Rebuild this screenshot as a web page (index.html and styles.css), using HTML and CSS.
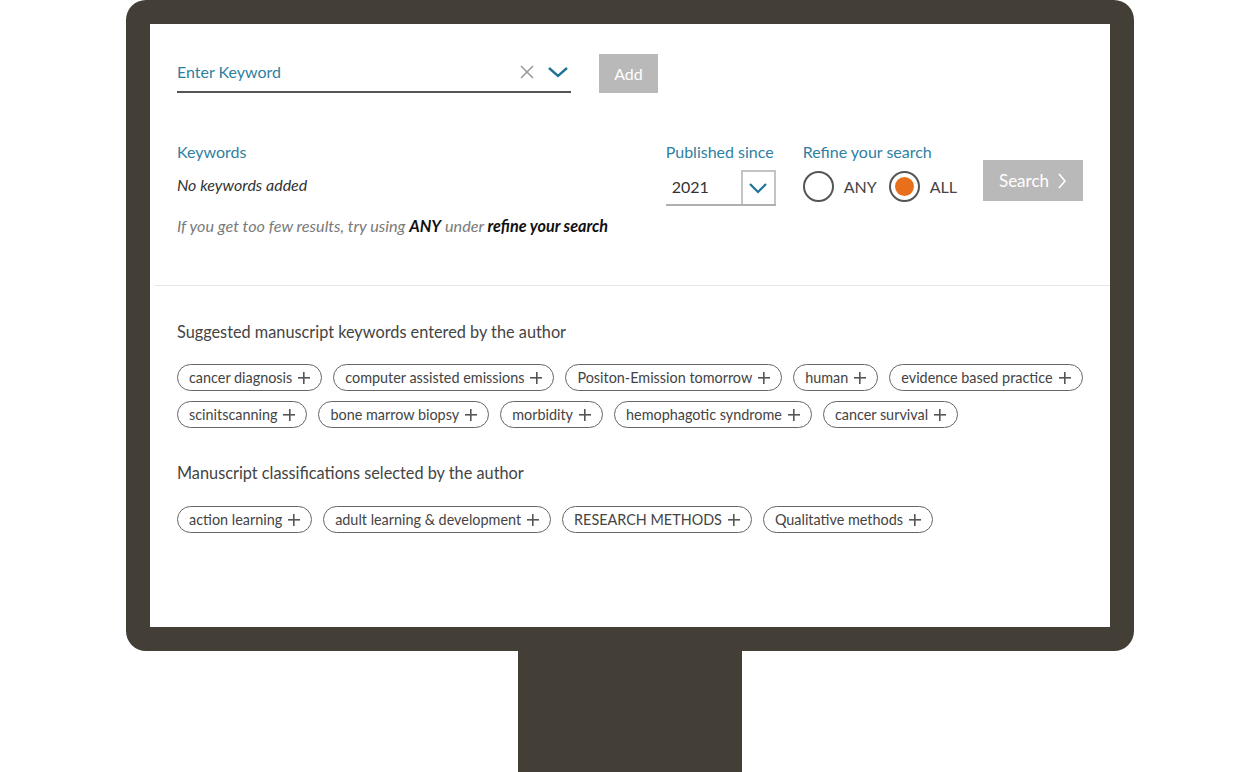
FILE: index.html
```html
<!DOCTYPE html>
<html lang="en">
<head>
  <meta charset="UTF-8">
  <title>Keyword Search</title>
  <link rel="stylesheet" href="styles.css">
</head>
<body>
  <div class="monitor">
    <div class="screen">
      <div class="top">
        <div class="entry">
          <div class="field">
            <span class="placeholder">Enter Keyword</span>
            <svg class="clear" width="16" height="16" viewBox="0 0 16 16"><path d="M2 2 L14 14 M14 2 L2 14" stroke="#9a9a9a" stroke-width="1.6" fill="none"/></svg>
            <svg class="caret" width="22" height="14" viewBox="0 0 22 14"><path d="M2 3 L11 11 L20 3" stroke="#1f7396" stroke-width="2.4" fill="none"/></svg>
          </div>
          <div class="btn add">Add</div>
        </div>

        <div class="filters">
          <div class="keywords">
            <div class="label">Keywords</div>
            <div class="empty">No keywords added</div>
            <div class="hint">If you get too few results, try using <b>ANY</b> under <b>refine your search</b></div>
          </div>

          <div class="since">
            <div class="label">Published since</div>
            <div class="select">
              <span>2021</span>
              <div class="select-btn">
                <svg width="20" height="12" viewBox="0 0 20 12"><path d="M2 2 L10 10 L18 2" stroke="#1f7396" stroke-width="2.2" fill="none"/></svg>
              </div>
            </div>
          </div>

          <div class="refine">
            <div class="label">Refine your search</div>
            <div class="radios">
              <div class="radio"></div>
              <span>ANY</span>
              <div class="radio on"></div>
              <span>ALL</span>
            </div>
          </div>

          <div class="btn search">Search
            <svg width="10" height="18" viewBox="0 0 10 18"><path d="M2 2 L8 9 L2 16" stroke="#fff" stroke-width="1.6" fill="none"/></svg>
          </div>
        </div>
      </div>

      <div class="bottom">
        <h2>Suggested manuscript keywords entered by the author</h2>
        <div class="chips">
          <span class="chip">cancer diagnosis</span>
          <span class="chip">computer assisted emissions</span>
          <span class="chip">Positon-Emission tomorrow</span>
          <span class="chip">human</span>
          <span class="chip">evidence based practice</span>
        </div>
        <div class="chips">
          <span class="chip">scinitscanning</span>
          <span class="chip">bone marrow biopsy</span>
          <span class="chip">morbidity</span>
          <span class="chip">hemophagotic syndrome</span>
          <span class="chip">cancer survival</span>
        </div>

        <h2 class="second">Manuscript classifications selected by the author</h2>
        <div class="chips">
          <span class="chip">action learning</span>
          <span class="chip">adult learning &amp; development</span>
          <span class="chip">RESEARCH METHODS</span>
          <span class="chip">Qualitative methods</span>
        </div>
      </div>
    </div>
    <div class="stand"></div>
  </div>
</body>
</html>
```

FILE: styles.css
```css
body {
  margin: 0;
  background: #fff;
  font-family: Lato, "Open Sans", sans-serif;
  color: #444;
}

.monitor {
  display: flex;
  flex-direction: column;
  align-items: center;
}

.screen {
  width: 960px;
  height: 603px;
  border: 24px solid #433f37;
  border-radius: 20px;
  background: #fff;
}

.stand {
  width: 224px;
  height: 121px;
  background: #433f37;
}

.top {
  padding: 30px 27px 0 27px;
}

.entry {
  display: flex;
  gap: 28px;
}

.field {
  width: 394px;
  height: 35px;
  padding-bottom: 2px;
  border-bottom: 2px solid #555;
  display: flex;
  align-items: center;
}

.placeholder {
  flex: 1;
  font-size: 16px;
  color: #2f7fa0;
}

.clear {
  margin-right: 12px;
}

.caret {
  margin-right: 2px;
}

.btn {
  background: #b9b9b9;
  color: #fff;
  display: flex;
  align-items: center;
  justify-content: center;
}

.add {
  width: 59px;
  height: 39px;
  font-size: 16px;
}

.filters {
  display: flex;
  margin-top: 49px;
  height: 96px;
}

.label {
  font-size: 16px;
  line-height: 20px;
  color: #2f7fa0;
}

.keywords {
  flex: 1;
}

.empty {
  margin-top: 13px;
  font-size: 16px;
  font-style: italic;
  color: #333;
}

.hint {
  margin-top: 22px;
  font-size: 16.2px;
  font-style: italic;
  color: #7a7a7a;
}

.hint b {
  color: #111;
  font-weight: 700;
}

.since {
  width: 110px;
}

.select {
  margin-top: 6px;
  height: 36px;
  border-bottom: 2px solid #b0b0b0;
  display: flex;
  align-items: center;
  justify-content: space-between;
  padding-left: 6px;
  font-size: 16px;
  color: #333;
}

.select-btn {
  width: 31px;
  height: 32px;
  border: 2px solid #c4c4c4;
  border-bottom: none;
  display: flex;
  align-items: center;
  justify-content: center;
  align-self: flex-end;
}

.refine {
  margin-left: 27px;
}

.radios {
  display: flex;
  align-items: center;
  margin-top: 9px;
  font-size: 16px;
  color: #444;
}

.radio {
  width: 27px;
  height: 27px;
  border: 2px solid #555;
  border-radius: 50%;
  display: flex;
  align-items: center;
  justify-content: center;
  margin-right: 10px;
}

.radios span {
  margin-right: 12px;
}

.radios span:last-child {
  margin-right: 0;
}

.radio.on::after {
  content: "";
  width: 19px;
  height: 19px;
  border-radius: 50%;
  background: #e8701a;
}

.search {
  margin-left: 26px;
  margin-top: 18px;
  width: 100px;
  height: 41px;
  font-size: 17px;
  gap: 8px;
}

.bottom {
  margin-top: 47px;
  border-top: 1px solid #e6e6e6;
  margin-left: 5px;
  padding: 36px 27px 0 22px;
}

h2 {
  margin: 0 0 22px 0;
  font-size: 16.3px;
  line-height: 20px;
  font-weight: 400;
  color: #444;
}

h2.second {
  margin-top: 35px;
  margin-bottom: 23px;
}

.chips {
  display: flex;
  gap: 11px;
  margin-bottom: 10px;
}

.chip {
  flex-shrink: 0;
  white-space: nowrap;
  height: 25px;
  border: 1.5px solid #666;
  border-radius: 14px;
  padding: 0 11px;
  display: flex;
  align-items: center;
  font-size: 14.4px;
  color: #444;
}

.chip::after {
  content: "";
  width: 12px;
  height: 12px;
  margin-left: 6px;
  background:
    linear-gradient(#555, #555) center / 12px 1.6px no-repeat,
    linear-gradient(#555, #555) center / 1.6px 12px no-repeat;
}
```
